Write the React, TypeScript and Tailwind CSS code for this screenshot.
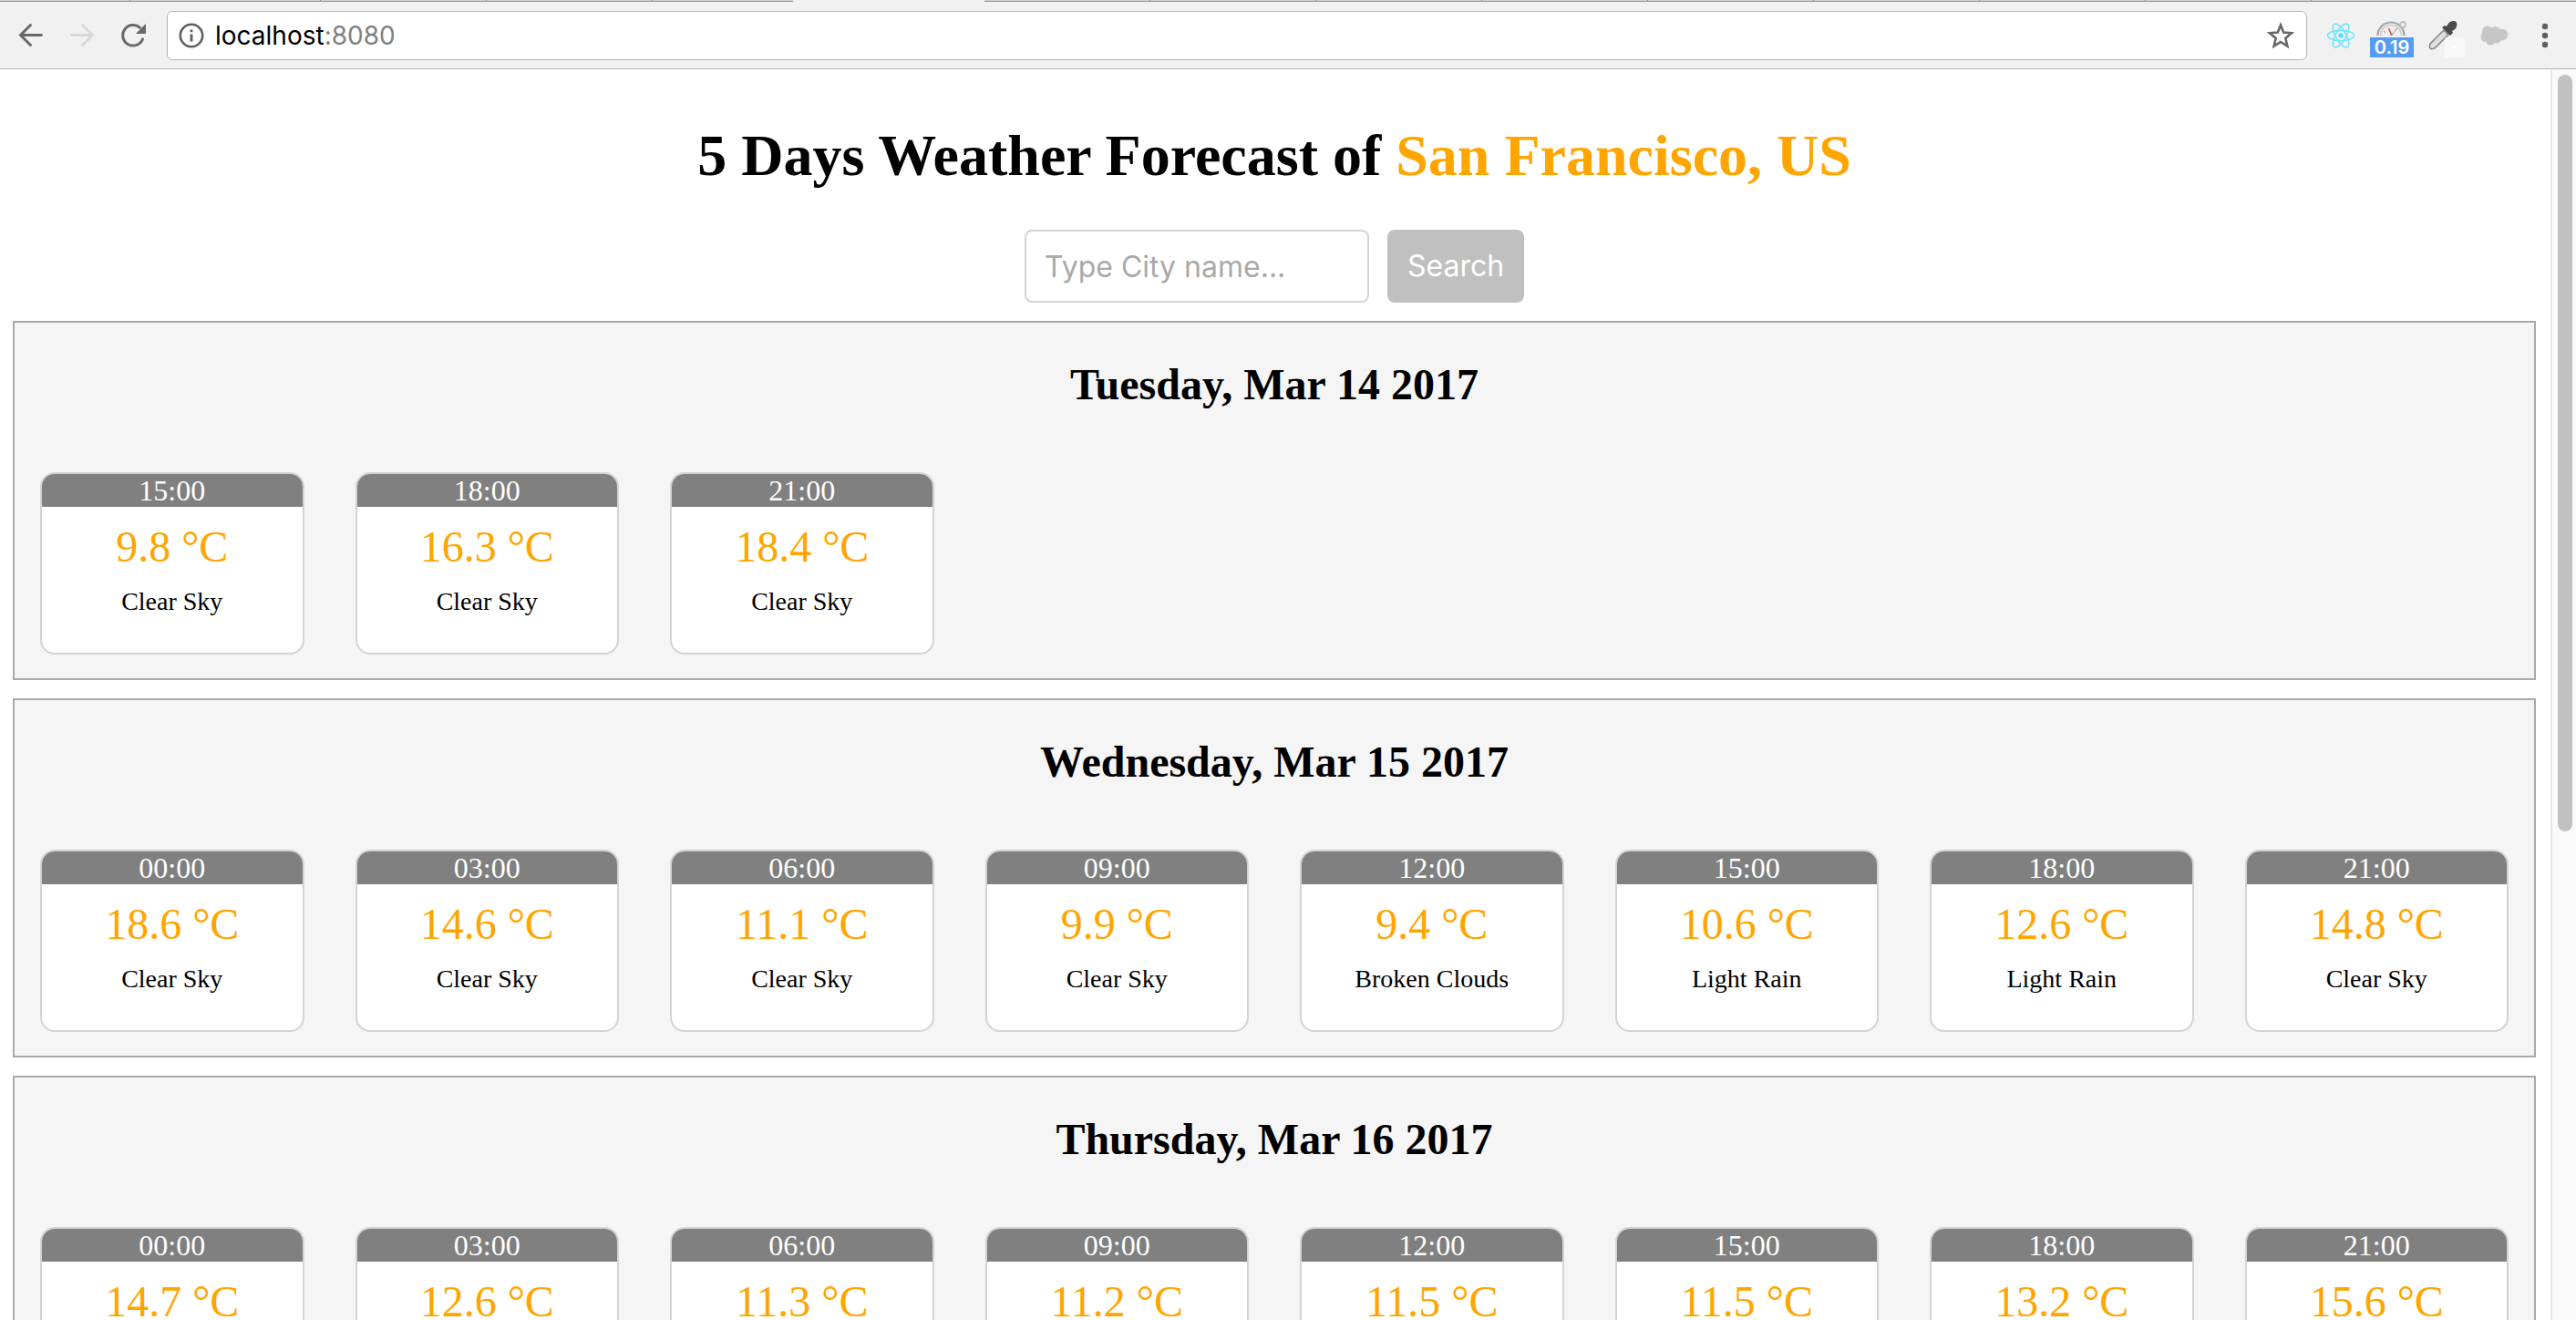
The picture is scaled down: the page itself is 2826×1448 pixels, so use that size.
import type { ReactNode } from "react";

type Slot = { time: string; temp: string; sky?: string };
type Day = { date: string; slots: Slot[] };

const days: Day[] = [
  {
    date: "Tuesday, Mar 14 2017",
    slots: [
      { time: "15:00", temp: "9.8", sky: "Clear Sky" },
      { time: "18:00", temp: "16.3", sky: "Clear Sky" },
      { time: "21:00", temp: "18.4", sky: "Clear Sky" },
    ],
  },
  {
    date: "Wednesday, Mar 15 2017",
    slots: [
      { time: "00:00", temp: "18.6", sky: "Clear Sky" },
      { time: "03:00", temp: "14.6", sky: "Clear Sky" },
      { time: "06:00", temp: "11.1", sky: "Clear Sky" },
      { time: "09:00", temp: "9.9", sky: "Clear Sky" },
      { time: "12:00", temp: "9.4", sky: "Broken Clouds" },
      { time: "15:00", temp: "10.6", sky: "Light Rain" },
      { time: "18:00", temp: "12.6", sky: "Light Rain" },
      { time: "21:00", temp: "14.8", sky: "Clear Sky" },
    ],
  },
  {
    date: "Thursday, Mar 16 2017",
    slots: [
      { time: "00:00", temp: "14.7" },
      { time: "03:00", temp: "12.6" },
      { time: "06:00", temp: "11.3" },
      { time: "09:00", temp: "11.2" },
      { time: "12:00", temp: "11.5" },
      { time: "15:00", temp: "11.5" },
      { time: "18:00", temp: "13.2" },
      { time: "21:00", temp: "15.6" },
    ],
  },
];

const tabEdge = "border-b border-[#959595] bg-[#cfcfcf]";
const tab = "w-[182px] border-r border-b border-[#959595] bg-[#cfcfcf]";

/* Lower edge of the browser's tab row; the gap is the active tab. */
function TabStrip() {
  return (
    <div className="flex h-[2px]">
      <div className="w-[143px] border-r border-b border-[#959595] bg-[#cfcfcf]" />
      <div className="w-[209px] border-r border-b border-[#959595] bg-[#cfcfcf]" />
      <div className={tab} />
      <div className={tab} />
      <div className={`w-[154px] ${tabEdge}`} />
      <div className="w-[210px]" />
      {Array.from({ length: 8 }, (_, i) => (
        <div key={i} className={tab} />
      ))}
      <div className={`flex-1 ${tabEdge}`} />
    </div>
  );
}

function NavButton({ label, disabled, children }: { label: string; disabled?: boolean; children: ReactNode }) {
  return (
    <button type="button" aria-label={label} disabled={disabled} className="size-8 shrink-0">
      <svg viewBox="0 0 32 32" className="size-8" fill="none" aria-hidden="true">
        {children}
      </svg>
    </button>
  );
}

function Extension({ label, children }: { label: string; children: ReactNode }) {
  return (
    <button type="button" aria-label={label} className="relative flex h-[54px] w-14 shrink-0 items-center justify-center">
      {children}
    </button>
  );
}

function Toolbar() {
  return (
    <header className="shrink-0 bg-[#f1f1f1]">
      <TabStrip />
      <div className="flex h-[74px] items-center border-b border-[#b2b2b2] pr-[6px] pl-[18px]">
        <div className="flex gap-6">
          <NavButton label="Back">
            <path d="M27.5 15.5H5M15.5 4.5L4.500 15.5L15.5 26.5" stroke="#686868" strokeWidth="2.9" strokeLinecap="round" />
          </NavButton>
          <NavButton label="Forward" disabled>
            <path d="M4.500 15.5H27M16.5 4.5L27.5 15.5L16.5 26.5" stroke="#d8d8d8" strokeWidth="2.9" strokeLinecap="round" />
          </NavButton>
          <NavButton label="Reload">
            <path d="M26.5 20A11.3 11.3 0 1 1 23.5 7.3" stroke="#686868" strokeWidth="3" strokeLinecap="round" />
            <path d="M30 3V14H19Z" fill="#686868" />
          </NavButton>
        </div>
        <div className="mr-[9px] ml-[21px] flex h-[54px] min-w-0 flex-1 items-center rounded-md border border-[#b5b5b5] bg-white px-3">
          <svg viewBox="0 0 28 28" className="mr-3 size-7 shrink-0" fill="none" aria-hidden="true">
            <circle cx="14" cy="14" r="12.2" stroke="#5f5f5f" strokeWidth="2.6" />
            <path d="M14 12.5V20.5M14 7.5V10.3" stroke="#5f5f5f" strokeWidth="2.8" />
          </svg>
          <p className="flex-1 font-[Inter,sans-serif] text-[28px] leading-8 text-black">
            localhost<span className="text-[#808080]">:8080</span>
          </p>
          <button type="button" aria-label="Bookmark this page">
            <svg viewBox="0 0 32 32" className="size-8" fill="none" aria-hidden="true">
              <path
                d="M16 4.5L19.2 12.6L28 13.3L21.3 19L23.4 27.6L16 23L8.6 27.6L10.7 19L4 13.3L12.8 12.6Z"
                stroke="#686868"
                strokeWidth="2.6"
              />
            </svg>
          </button>
        </div>
        <Extension label="React Developer Tools">
          <svg viewBox="0 0 32 32" className="size-8" fill="none" stroke="#70e4fb" strokeWidth="1.6" aria-hidden="true">
            <ellipse cx="16" cy="16" rx="14.5" ry="5.6" />
            <ellipse cx="16" cy="16" rx="14.5" ry="5.6" transform="rotate(60 16 16)" />
            <ellipse cx="16" cy="16" rx="14.5" ry="5.6" transform="rotate(120 16 16)" />
            <circle cx="16" cy="16" r="2.8" fill="#61dafb" stroke="none" />
          </svg>
        </Extension>
        <Extension label="Page load time">
          <svg viewBox="0 0 36 16" className="mb-4 h-4 w-9" fill="none" aria-hidden="true">
            <circle cx="17" cy="16" r="14.500" fill="#f0eeee" stroke="#a3a3a3" strokeWidth="2.200" />
            <circle cx="17" cy="16" r="11.500" stroke="#cccccc" strokeWidth="1.600" />
            <circle cx="30" cy="4" r="3" stroke="#bdbdbd" strokeWidth="1.800" />
            <path d="M18 16L14.500 8" stroke="#e04a3f" strokeWidth="1.600" />
            <path d="M18 15L24 8M9 11L11 13" stroke="#8a8a8a" strokeWidth="1" />
          </svg>
          <span className="absolute inset-x-1 bottom-[3px] h-[22px] bg-[#559cf2] text-center font-[Inter,sans-serif] text-[20px] leading-[22px] font-semibold text-white">
            0.19
          </span>
        </Extension>
        <Extension label="Color picker">
          <svg viewBox="0 0 32 32" className="size-8" aria-hidden="true">
            <path d="M17 10L22 15L8 29C6 31 3 31 2 30C1 29 1 26 3 24Z" fill="#dedede" stroke="#808080" strokeWidth="1.5" />
            <path d="M15 7L18 5L20 6C22 2 24 0 28 0C31 0 32 3 31 6C30 9 28 10 26 11L27 13L24 16Z" fill="#4a4a4a" />
          </svg>
          <span className="absolute right-1 bottom-[3px] flex size-[22px] items-center justify-center rounded-xs bg-[#f7f8fa]">
            <span className="size-1 rounded-full bg-white" />
          </span>
        </Extension>
        <Extension label="Cloud">
          <svg viewBox="0 0 32 24" className="h-6 w-8" fill="#c6c6c6" aria-hidden="true">
            <circle cx="9" cy="7.5" r="6" />
            <circle cx="17.5" cy="7.5" r="5.5" />
            <circle cx="25" cy="11" r="6.3" />
            <circle cx="7" cy="13.5" r="5.5" />
            <circle cx="12.5" cy="17" r="5.5" />
            <circle cx="19" cy="15.5" r="5" />
          </svg>
        </Extension>
        <Extension label="Menu">
          <svg viewBox="0 0 8 28" className="h-7 w-2" fill="#5f5f5f" aria-hidden="true">
            <circle cx="4" cy="4" r="3.2" />
            <circle cx="4" cy="14" r="3.2" />
            <circle cx="4" cy="24" r="3.2" />
          </svg>
        </Extension>
      </div>
    </header>
  );
}

function ForecastCard({ time, temp, sky }: Slot) {
  return (
    <li className="px-7">
      <div className="min-h-[200px] overflow-hidden rounded-2xl border-2 border-[#d3d3d3] bg-white text-center">
        <p className="bg-[#808080] text-[32px] leading-9 text-white">{time}</p>
        <p className="mt-4 text-[48px] leading-[56px] text-[#ffa500]">{temp} °C</p>
        {sky && <p className="mt-4 text-[28px] leading-8 text-black">{sky}</p>}
      </div>
    </li>
  );
}

export default function App() {
  return (
    <div className="flex h-screen flex-col overflow-hidden bg-white font-['Liberation_Serif',serif] text-black">
      <Toolbar />
      <div className="flex min-h-0 flex-1">
        <main className="min-w-0 flex-1 overflow-hidden pt-14 pr-4 pl-[14px]">
          <h1 className="mb-[42px] text-center text-[64px] leading-[78px] font-bold">
            5 Days Weather Forecast of <span className="text-[#ffa500]">San Francisco, US</span>
          </h1>
          <form className="mb-5 flex justify-center gap-5" onSubmit={(e) => e.preventDefault()}>
            <input
              type="text"
              aria-label="City name"
              placeholder="Type City name..."
              className="h-20 w-[378px] rounded-lg border-2 border-[#d3d3d3] bg-white px-5 font-[Inter,sans-serif] text-[32px] placeholder:text-[#a9a9a9]"
            />
            <button type="submit" className="h-20 w-[150px] rounded-lg bg-[#c0c0c0] font-[Inter,sans-serif] text-[32px] text-white">
              Search
            </button>
          </form>
          <div className="flex flex-col gap-5">
            {days.map((day) => (
              <section key={day.date} className="border-2 border-[#a9a9a9] bg-[#f5f5f5] pt-10">
                <h2 className="mb-10 text-center text-[48px] leading-[56px] font-bold">{day.date}</h2>
                <ul className="grid grid-cols-8 pt-7 pb-[26px]">
                  {day.slots.map((slot) => (
                    <ForecastCard key={slot.time} {...slot} />
                  ))}
                </ul>
              </section>
            ))}
          </div>
        </main>
        <div className="w-7 shrink-0 border-l-2 border-[#e8e8e8] bg-[#fafafa] px-[6px] pt-[6px]">
          <div className="h-[830px] w-4 rounded-full bg-[#c1c1c1]" />
        </div>
      </div>
    </div>
  );
}
